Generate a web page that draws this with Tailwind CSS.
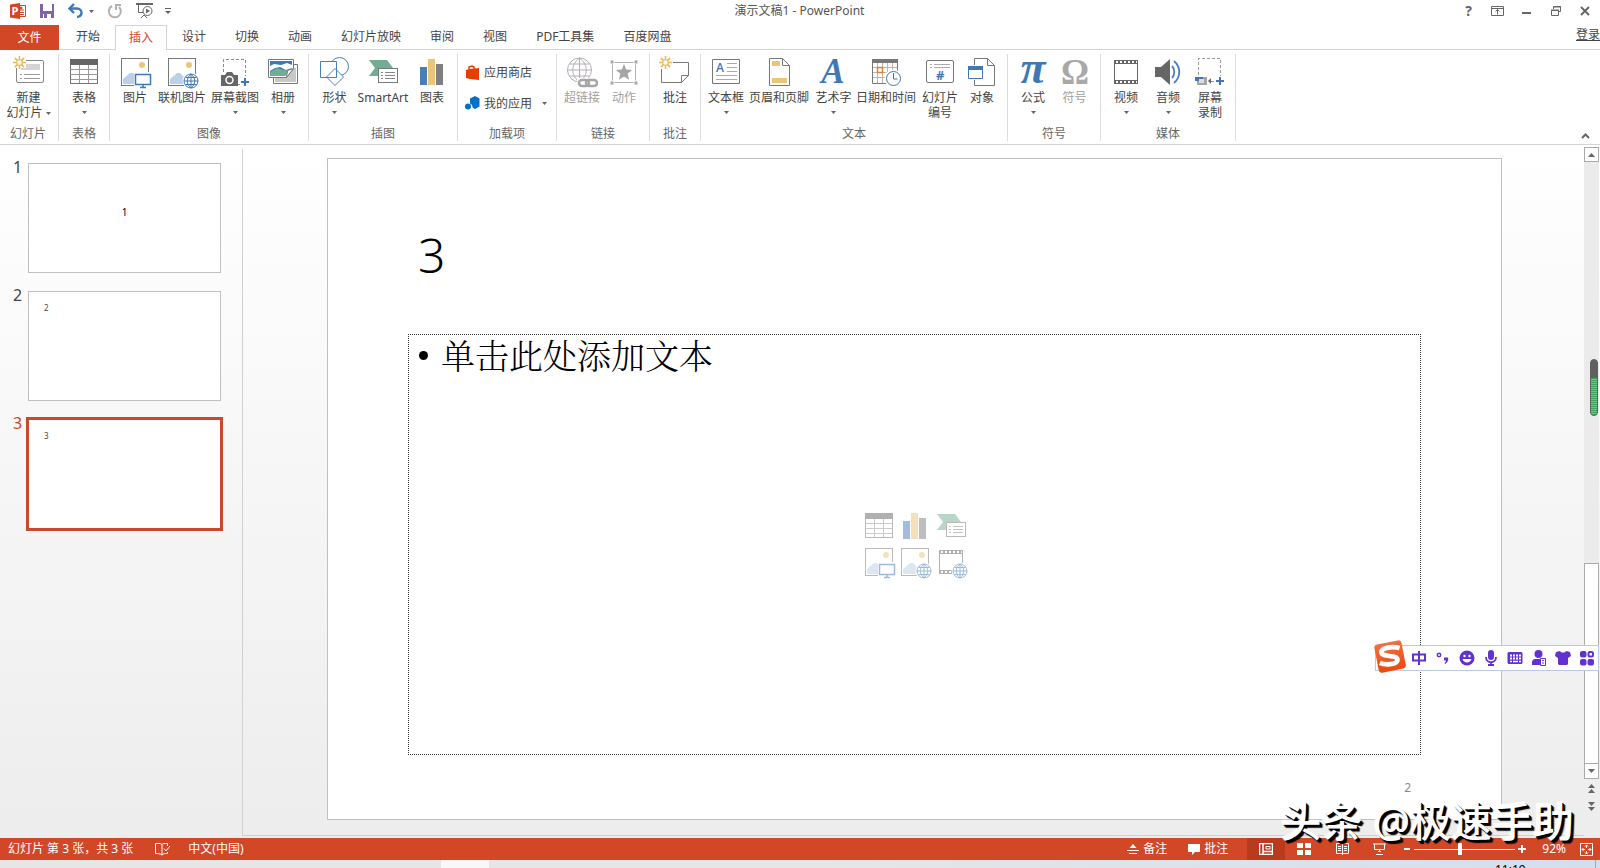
<!DOCTYPE html>
<html lang="zh-CN">
<head>
  <meta charset="UTF-8">
  <meta name="viewport" content="width=device-width, initial-scale=1.0">
  <title>演示文稿1 - PowerPoint</title>
  <script src="https://cdn.jsdelivr.net/npm/@tailwindcss/browser@4"></script>
</head>
<body class="relative flex h-screen flex-col overflow-hidden bg-white font-['Noto_Sans','Noto_Sans_CJK_SC',sans-serif] text-xs text-[#444]">

  <!-- Shared icons -->
  <svg class="hidden">
    <symbol id="i-table" viewBox="0 0 32 32">
      <rect x="2.5" y="3.5" width="27" height="24" fill="#fff" stroke="#777"/>
      <rect x="2" y="3" width="28" height="6" fill="#666"/>
      <path d="M11.5 9v18M20.5 9v18M3 13.5h26M3 18.5h26M3 23.5h26" stroke="#999" fill="none"/>
    </symbol>
    <symbol id="i-chart" viewBox="0 0 32 32">
      <path d="M4 11h7v18H4z" fill="#4a7ebb"/><path d="M12 3h7v26h-7z" fill="#eac57a"/><path d="M20 8h7v21h-7z" fill="#7f7f7f"/>
    </symbol>
    <symbol id="i-smartart" viewBox="0 0 32 32">
      <path d="M2 4h18l6 8H11v8H2l6-8z" fill="#71ac93"/>
      <rect x="11.5" y="12.5" width="19" height="14" fill="#fff" stroke="#777"/>
      <path d="M14 16.5h2M18 16.5h10M14 19.5h2M18 19.5h10M14 22.5h2M18 22.5h10" stroke="#888"/>
    </symbol>
    <symbol id="i-photo" viewBox="0 0 32 32">
      <rect x="2.5" y="2.5" width="27" height="27" fill="#fff" stroke="#777"/>
      <circle cx="23" cy="9" r="3" fill="#eac57a"/>
      <path d="M4 28v-5l7-6h3l7 7v4z" fill="#bcd0ea"/>
    </symbol>
    <symbol id="i-globe" viewBox="0 0 16 16">
      <circle cx="8" cy="8" r="7" fill="#fff" stroke="#3f78b5"/>
      <path d="M1 8h14M8 1v14M2.500 4.500h11M2.500 11.500h11M8 1c-5 4-5 10 0 14M8 1c5 4 5 10 0 14" fill="none" stroke="#3f78b5"/>
    </symbol>
    <symbol id="i-picture" viewBox="0 0 34 34">
      <use href="#i-photo" width="32" height="32"/>
      <path d="M15 16h17v17H15z" fill="#fff"/>
      <rect x="16.500" y="18.500" width="15" height="10" fill="#fff" stroke="#3f78b5" stroke-width="1.500"/>
      <path d="M24 29v2M21 31.500h6" stroke="#3f78b5" stroke-width="1.500"/>
    </symbol>
    <symbol id="i-online" viewBox="0 0 34 34">
      <use href="#i-photo" width="32" height="32"/>
      <circle cx="25" cy="25" r="8.500" fill="#fff"/>
      <use href="#i-globe" x="17" y="17" width="16" height="16"/>
    </symbol>
    <symbol id="i-film" viewBox="0 0 32 32">
      <path d="M4 4h24v24H4z" fill="#666"/><path d="M5 8h22v16H5z" fill="#fff"/>
      <path d="M6 6h21M6 26h21" stroke="#fff" stroke-width="2" stroke-dasharray="2 2"/>
    </symbol>
    <symbol id="i-spark" viewBox="0 0 14 14">
      <path d="M7 0v14M0 7h14M2 2l10 10M12 2L2 12" stroke="#e8b654" stroke-width="1.600"/>
      <circle cx="7" cy="7" r="3" fill="#fff" stroke="#e8b654" stroke-width="1.200"/>
    </symbol>
    <symbol id="i-down" viewBox="0 0 7 4"><path d="M0 0h7L3.500 4z" fill="#666"/></symbol>
  </svg>

  <!-- Title bar -->
  <header class="flex h-[25px] shrink-0 items-center pb-[3px]">
    <div class="flex flex-1 items-center pl-[9px]">
      <svg class="size-[18px]" viewBox="0 0 18 18" role="img" aria-label="PowerPoint">
        <path d="M9 3.500h7.500v11H9" fill="#fff" stroke="#d24726"/><path d="M11 8h4M11 10.500h4M11 12.500h4" stroke="#d24726"/><circle cx="12" cy="6" r="1.500" fill="#d24726"/>
        <path d="M1 2.500L11 1v16L1 15.500z" fill="#d24726"/>
        <text x="2.500" y="13" font-size="11" font-weight="700" fill="#fff" font-family="Open Sans">P</text>
      </svg>
      <button aria-label="保存" class="ml-[12px]"><svg class="size-4" viewBox="0 0 16 16"><path d="M1 1h14v14H1z" fill="#8064a8"/><path d="M4 1h9v7H4z" fill="#fff"/><path d="M4 11h8v4H4z" fill="#fff"/><path d="M5 11h3v4H5z" fill="#8064a8"/></svg></button>
      <button aria-label="撤消" class="ml-[13px] flex items-center gap-[5px]"><svg class="size-4" viewBox="0 0 16 16"><path d="M2 5.500h7c6 0 6 8 0 8.500" fill="none" stroke="#3f78b5" stroke-width="2.400"/><path d="M6 1L1.500 5.500 6 10" fill="none" stroke="#3f78b5" stroke-width="2.400"/></svg><svg class="h-[3px] w-[5px]"><use href="#i-down"/></svg></button>
      <button aria-label="恢复" class="ml-[13px]"><svg class="size-4" viewBox="0 0 16 16"><path d="M5 3a6 6 0 1 0 7 1" fill="none" stroke="#b1b1b1" stroke-width="2"/><path d="M9 7V2h5" fill="none" stroke="#b1b1b1" stroke-width="2"/></svg></button>
      <button aria-label="从头开始放映" class="ml-[13px]"><svg class="h-4 w-[17px]" viewBox="0 0 17 16"><path d="M0 1h17" stroke="#666" stroke-width="2"/><path d="M2.500 2v7.500H8M5 15l3-3 3 3" fill="none" stroke="#666"/><circle cx="11.500" cy="8" r="4.500" fill="#fff" stroke="#666"/><path d="M10 5.500v5l4-2.500z" fill="#666"/></svg></button>
      <button aria-label="自定义快速访问工具栏" class="ml-[12px]"><svg class="h-2 w-[6px]" viewBox="0 0 6 8"><path d="M0 1.500h6" stroke="#666"/><path d="M0 4h6L3 7z" fill="#666"/></svg></button>
    </div>
    <h1 class="shrink-0 text-[#555]">演示文稿1 - PowerPoint</h1>
    <div class="flex flex-1 items-center justify-end pr-[10px] text-[#666]">
      <button aria-label="帮助" class="mr-[19px] text-sm font-bold">?</button>
      <button aria-label="功能区显示选项" class="mr-[18px]"><svg class="h-[10px] w-[13px]" viewBox="0 0 13 10" fill="none" stroke="currentColor"><path d="M.5.5h12v9H.5zM1 2.500h11M6.500 8.500v-5M4.500 5.500l2-2 2 2"/></svg></button>
      <button aria-label="最小化" class="mr-[20px]"><svg class="h-[10px] w-[9px]" viewBox="0 0 9 10"><path d="M0 7h9" stroke="currentColor" stroke-width="2"/></svg></button>
      <button aria-label="向下还原" class="mr-[19px]"><svg class="size-[10px]" viewBox="0 0 10 10" fill="none" stroke="currentColor"><path d="M.5 4.500h7v5h-7zM0 4h8M2.500 3V.5h7v5H8M2 1h8"/></svg></button>
      <button aria-label="关闭"><svg class="size-[10px]" viewBox="0 0 10 10"><path d="M1 1l8 8M9 1L1 9" stroke="currentColor" stroke-width="2"/></svg></button>
    </div>
  </header>

  <!-- Ribbon tabs -->
  <nav class="flex h-[25px] shrink-0 gap-px border-b border-[#d4d4d4] leading-6">
    <button class="-mb-px mr-[2px] w-[59px] bg-[#d24726] text-white">文件</button>
    <button class="px-[14px]">开始</button>
    <button class="-mb-px border border-b-0 border-[#d4d4d4] bg-white px-[13px] text-[#d24726]">插入</button>
    <button class="px-[14px]">设计</button>
    <button class="px-[14px]">切换</button>
    <button class="px-[14px]">动画</button>
    <button class="px-[14px]">幻灯片放映</button>
    <button class="px-[14px]">审阅</button>
    <button class="px-[14px]">视图</button>
    <button class="px-[14px]">PDF工具集</button>
    <button class="px-[14px]">百度网盘</button>
    <a href="#" class="-mt-px ml-auto leading-[22px] underline">登录</a>
  </nav>

  <!-- Ribbon -->
  <div class="flex h-[95px] shrink-0 border-b border-[#d4d4d4] pt-1 pb-[3px] leading-[15px] whitespace-nowrap">
    <section class="flex w-[59px] flex-col justify-between border-r border-[#dcdcdc]">
      <button class="flex w-[57px] flex-col items-center gap-[2px] pt-[2px]">
        <svg class="size-8" viewBox="0 0 32 32"><rect x="3.500" y="4.500" width="27" height="22" rx="1.500" fill="#fff" stroke="#888"/><path d="M8 8h19v6H8z" fill="#d4d4d4"/><path d="M7 18.500h2M11 18.500h16M7 22.500h2M11 22.500h16" stroke="#999"/><path d="M0 0h13v12H0z" fill="#fff"/><use href="#i-spark" width="13" height="13"/></svg>
        <span>新建<br>幻灯片 <svg class="inline h-[3px] w-[5px] align-middle"><use href="#i-down"/></svg></span>
      </button>
      <h2 class="pr-[2px] text-center text-[#666]">幻灯片</h2>
    </section>

    <section class="flex w-[51px] flex-col justify-between border-r border-[#dcdcdc]">
      <button class="flex flex-col items-center gap-[2px] pt-[2px]">
        <svg class="size-8"><use href="#i-table"/></svg>
        <span>表格</span>
        <svg class="mt-1 h-[3px] w-[5px]"><use href="#i-down"/></svg>
      </button>
      <h2 class="text-center text-[#666]">表格</h2>
    </section>

    <section class="flex w-[199px] flex-col justify-between border-r border-[#dcdcdc]">
      <div class="flex items-start pl-[2px]">
        <button class="flex w-[46px] flex-col items-center gap-[2px] pt-[2px]">
          <svg class="-mr-[2px] -mb-[2px] size-[34px]"><use href="#i-picture"/></svg>
          <span>图片</span>
        </button>
        <button class="flex w-[48px] flex-col items-center gap-[2px] pt-[2px]">
          <svg class="-mr-[2px] -mb-[2px] size-[34px]"><use href="#i-online"/></svg>
          <span>联机图片</span>
        </button>
        <button class="flex w-[58px] flex-col items-center gap-[2px] pt-[2px]">
          <svg class="size-8" viewBox="0 0 32 32"><path d="M4.500 16V3.500h22V20M18 28.500h4" fill="none" stroke="#888" stroke-dasharray="3 2"/><path d="M2 19h4l2-3h5l2 3h4v11H2z" fill="#666"/><circle cx="10.500" cy="24" r="3.500" fill="#666" stroke="#fff" stroke-width="1.500"/><path d="M26 22v8M22 26h8" stroke="#3f78b5" stroke-width="2"/></svg>
          <span>屏幕截图</span>
          <svg class="mt-1 h-[3px] w-[5px]"><use href="#i-down"/></svg>
        </button>
        <button class="flex w-[38px] flex-col items-center gap-[2px] pt-[2px]">
          <svg class="size-8" viewBox="0 0 32 32"><path d="M6.500 8.500h24v19h-24z" fill="#fff" stroke="#777"/><path d="M8 22l10-4 5-6h6v14H8z" fill="#c8c8c8"/><path d="M1.500 3.500h25v9l-7 9h-18z" fill="#fff" stroke="#777"/><path d="M3 5h22v7l-7 8H3z" fill="#3f78b5"/><path d="M3 16l7-4 12 3-4 5H3z" fill="#71ac93"/><path d="M3 10l4-2 7 1 6-2 5 2v3l-6 2-6-3-5 1-5 3z" fill="#fff"/><path d="M19.500 21.500l1-7 6-2z" fill="#fff" stroke="#777"/></svg>
          <span>相册</span>
          <svg class="mt-1 h-[3px] w-[5px]"><use href="#i-down"/></svg>
        </button>
      </div>
      <h2 class="text-center text-[#666]">图像</h2>
    </section>

    <section class="flex w-[149px] flex-col justify-between border-r border-[#dcdcdc]">
      <div class="flex items-start pl-[7px]">
        <button class="flex w-[37px] flex-col items-center gap-[2px] pt-[2px]">
          <svg class="size-8" viewBox="0 0 32 32" fill="#fff" stroke="#4a7ebb"><circle cx="20.500" cy="10.500" r="9"/><path d="M1.500 5.500h16v16h-16zM16 12.500l8.500 8.500-8.500 8.500L7.500 21z"/></svg>
          <span>形状</span>
          <svg class="mt-1 h-[3px] w-[5px]"><use href="#i-down"/></svg>
        </button>
        <button class="flex w-[60px] flex-col items-center gap-[2px] pt-[2px]">
          <svg class="size-8"><use href="#i-smartart"/></svg>
          <span>SmartArt</span>
        </button>
        <button class="flex w-[38px] flex-col items-center gap-[2px] pt-[2px]">
          <svg class="size-8"><use href="#i-chart"/></svg>
          <span>图表</span>
        </button>
      </div>
      <h2 class="text-center text-[#666]">插图</h2>
    </section>

    <section class="flex w-[99px] flex-col justify-between border-r border-[#dcdcdc]">
      <div class="flex flex-col gap-4 pt-[11px] pl-[7px]">
        <button class="flex items-center gap-1">
          <svg class="size-[15px]" viewBox="0 0 15 15"><path d="M4 5V2l3-1 2 1v3" fill="none" stroke="#eb3c00" stroke-width="1.500"/><path d="M1 5l4-1v10l-4-1zM5 4l9-1v12l-9-1z" fill="#eb3c00"/></svg>
          应用商店
        </button>
        <button class="flex items-center gap-1">
          <svg class="size-[15px]" viewBox="0 0 15 15" fill="#0072c6"><path d="M10 0l4.500 2.500v8L10 13l-2.500-1.500a4 4 0 0 0-2.500-4v-5z"/><circle cx="3" cy="10.500" r="3"/></svg>
          我的应用
          <svg class="ml-[6px] h-[3px] w-[5px]"><use href="#i-down"/></svg>
        </button>
      </div>
      <h2 class="text-center text-[#666]">加载项</h2>
    </section>

    <section class="flex w-[93px] flex-col justify-between border-r border-[#dcdcdc]">
      <div class="flex items-start pl-1 text-[#a0a0a0]">
        <button class="flex w-[42px] flex-col items-center gap-[2px] pt-[2px]">
          <svg class="size-8" viewBox="0 0 32 32" fill="none" stroke="#b3aeb6"><circle cx="13.500" cy="14" r="12"/><path d="M1.500 14h24M13.500 2v24M3.500 8h20M3.500 20h20M13.500 2c-9 7-9 17 0 24M13.500 2c9 7 9 17 0 24"/><path d="M11 22h21v10H11z" fill="#fff" stroke="none"/><g stroke="#a5a5a5" stroke-width="2.500"><rect x="13" y="24" width="10" height="6" rx="3"/><rect x="20" y="24" width="11" height="6" rx="3"/></g></svg>
          <span>超链接</span>
        </button>
        <button class="flex w-[42px] flex-col items-center gap-[2px] pt-[2px]">
          <svg class="size-8" viewBox="0 0 32 32"><path d="M4.500 6.500h23v20h-23z" fill="none" stroke="#b0b0b0"/><path d="M2 4h4v4H2zM26 4h4v4h-4zM2 25h4v4H2zM26 25h4v4h-4z" fill="#a5a5a5" stroke="#fff"/><path d="M16 8l2.200 5.600 6 .4-4.600 3.800 1.500 5.900L16 20.500l-5.100 3.200 1.500-5.900L7.800 14l6-.4z" fill="#a5a5a5"/></svg>
          <span>动作</span>
        </button>
      </div>
      <h2 class="text-center text-[#666]">链接</h2>
    </section>

    <section class="flex w-[51px] flex-col justify-between border-r border-[#dcdcdc]">
      <button class="flex flex-col items-center gap-[2px] pt-[2px]">
        <svg class="size-8" viewBox="0 0 32 32"><path d="M2.500 13v13.500h20l7-7v-13H14M22.500 26.500v-7h7" fill="none" stroke="#777"/><use href="#i-spark" width="13" height="13"/></svg>
        <span>批注</span>
      </button>
      <h2 class="text-center text-[#666]">批注</h2>
    </section>

    <section class="flex w-[307px] flex-col justify-between border-r border-[#dcdcdc]">
      <div class="flex items-start pl-[5px]">
        <button class="flex w-[40px] flex-col items-center gap-[2px] pt-[2px]">
          <svg class="size-8" viewBox="0 0 32 32"><path d="M2.500 3.500h27v24h-27z" fill="#fff" stroke="#777"/><text x="6" y="16" font-size="12" font-weight="600" fill="#3f78b5" font-family="Open Sans">A</text><path d="M17 7.500h10M17 11.500h10M17 15.500h10M6 19.500h21M6 23.500h21" stroke="#aaa"/></svg>
          <span>文本框</span>
          <svg class="mt-1 h-[3px] w-[5px]"><use href="#i-down"/></svg>
        </button>
        <button class="flex w-[66px] flex-col items-center gap-[2px] pt-[2px]">
          <svg class="size-8" viewBox="0 0 32 32"><path d="M6.500 2.500h13l7 7v20h-20z" fill="#fff" stroke="#777"/><path d="M19.500 2.500v7h7" fill="none" stroke="#777"/><path d="M9 5h8v5H9zM9 22h15v5H9z" fill="#eac57a"/></svg>
          <span>页眉和页脚</span>
        </button>
        <button class="flex w-[43px] flex-col items-center gap-[2px] pt-[2px]">
          <svg class="size-8 overflow-visible" viewBox="0 0 32 32"><text x="15" y="27" text-anchor="middle" font-size="35" font-weight="700" font-style="italic" fill="#3f78b5" font-family="Liberation Serif">A</text></svg>
          <span>艺术字</span>
          <svg class="mt-1 h-[3px] w-[5px]"><use href="#i-down"/></svg>
        </button>
        <button class="flex w-[62px] flex-col items-center gap-[2px] pt-[2px]">
          <svg class="size-8" viewBox="0 0 32 32"><path d="M2.500 3.500h25v24h-25z" fill="#fff" stroke="#777"/><path d="M2 3h26v4H2z" fill="#777"/><path d="M7.500 7v20M12.500 7v20M17.500 7v20M22.500 7v20M3 11.500h24M3 16.500h24M3 21.500h24" stroke="#c3b3a5"/><path d="M7.500 11.500h5v5h-5z" fill="#fff" stroke="#d9823b" stroke-width="1.500"/><circle cx="23.500" cy="22.500" r="9" fill="#fff"/><circle cx="23.500" cy="22.500" r="7" fill="#fff" stroke="#3f78b5"/><path d="M23.500 17v6h4" fill="none" stroke="#666"/></svg>
          <span>日期和时间</span>
        </button>
        <button class="flex w-[46px] flex-col items-center gap-[2px] pt-[2px]">
          <svg class="size-8" viewBox="0 0 32 32"><rect x="2.500" y="4.500" width="27" height="22" rx="1.500" fill="#fff" stroke="#777"/><path d="M6 8.500h2M10 8.500h16M6 11.500h2M10 11.500h16" stroke="#aaa"/><text x="12" y="24" font-size="13" font-weight="700" fill="#3f78b5" font-family="Open Sans">#</text></svg>
          <span>幻灯片<br>编号</span>
        </button>
        <button class="flex w-[38px] flex-col items-center gap-[2px] pt-[2px]">
          <svg class="size-8" viewBox="0 0 32 32"><path d="M8.500 2.500h13l7 7v20h-20z" fill="#fff" stroke="#777"/><path d="M21.500 2.500v7h7" fill="none" stroke="#777"/><path d="M1 9h17v15H1z" fill="#fff"/><path d="M2.500 10.500h14v12h-14z" fill="#fff" stroke="#3f78b5"/><path d="M2 10h15v4H2z" fill="#3f78b5"/></svg>
          <span>对象</span>
        </button>
      </div>
      <h2 class="text-center text-[#666]">文本</h2>
    </section>

    <section class="flex w-[93px] flex-col justify-between border-r border-[#dcdcdc]">
      <div class="flex items-start pl-[5px]">
        <button class="flex w-[40px] flex-col items-center gap-[2px] pt-[2px]">
          <svg class="size-8 overflow-visible" viewBox="0 0 32 32"><text x="16" y="27" text-anchor="middle" font-size="46" font-weight="700" font-style="italic" fill="#3f78b5" font-family="Liberation Serif">π</text></svg>
          <span>公式</span>
          <svg class="mt-1 h-[3px] w-[5px]"><use href="#i-down"/></svg>
        </button>
        <button class="flex w-[43px] flex-col items-center gap-[2px] pt-[2px] text-[#a0a0a0]">
          <svg class="size-8 overflow-visible" viewBox="0 0 32 32"><text x="16" y="28" text-anchor="middle" font-size="35" font-weight="700" fill="#a8a8a8" font-family="Liberation Serif">Ω</text></svg>
          <span>符号</span>
        </button>
      </div>
      <h2 class="text-center text-[#666]">符号</h2>
    </section>

    <section class="flex w-[135px] flex-col justify-between border-r border-[#dcdcdc]">
      <div class="flex items-start pl-1">
        <button class="flex w-[42px] flex-col items-center gap-[2px] pt-[2px]">
          <svg class="size-8"><use href="#i-film"/></svg>
          <span>视频</span>
          <svg class="mt-1 h-[3px] w-[5px]"><use href="#i-down"/></svg>
        </button>
        <button class="flex w-[42px] flex-col items-center gap-[2px] pt-[2px]">
          <svg class="size-8" viewBox="0 0 32 32"><path d="M3 11h6l9-8v26l-9-8H3z" fill="#666"/><path d="M20 10c3 3 3 9 0 12M22 5c7 6 7 16 0 22" fill="none" stroke="#4a7ebb" stroke-width="1.800"/></svg>
          <span>音频</span>
          <svg class="mt-1 h-[3px] w-[5px]"><use href="#i-down"/></svg>
        </button>
        <button class="flex w-[42px] flex-col items-center gap-[2px] pt-[2px]">
          <svg class="size-8" viewBox="0 0 32 32"><path d="M4.500 19V2.500h22V20M17 25.500h5" fill="none" stroke="#999" stroke-dasharray="3 2"/><path d="M1 21h12v8H3v-4H1z" fill="#a5a5a5"/><path d="M1 21h8v4H1z" fill="#3f78b5"/><path d="M5 23h5v4H5z" fill="#ddd"/><path d="M14 25l3-3v6z" fill="#666"/><path d="M26 21v8M22 25h8" stroke="#3f78b5" stroke-width="2"/></svg>
          <span>屏幕<br>录制</span>
        </button>
      </div>
      <h2 class="text-center text-[#666]">媒体</h2>
    </section>

    <button aria-label="折叠功能区" class="mr-[10px] ml-auto self-end pb-[2px]"><svg class="h-[6px] w-[9px]" viewBox="0 0 9 6"><path d="M1 5l3.500-3.500L8 5" fill="none" stroke="#666" stroke-width="2"/></svg></button>
  </div>

  <!-- Work area -->
  <main class="flex min-h-0 flex-1 bg-linear-to-b from-white to-[#ededed]">
    <!-- Slide thumbnails -->
    <aside class="mt-1 mb-[2px] flex w-[243px] shrink-0 flex-col gap-[18px] border-r border-[#d0d0d0] pt-[14px] text-base leading-[16px]">
      <a href="#" class="flex gap-[5px] pl-[13px]">
        <span class="-mt-1 w-[10px]">1</span>
        <span class="flex h-[110px] w-[193px] items-center justify-center border border-[#c0c0c0] bg-white pb-3 text-[10px] leading-3 text-black">1</span>
      </a>
      <a href="#" class="flex gap-[5px] pl-[13px]">
        <span class="-mt-1 w-[10px]">2</span>
        <span class="h-[110px] w-[193px] border border-[#c0c0c0] bg-white px-[15px] py-[10px] text-[8px] leading-3">2</span>
      </a>
      <a href="#" class="flex gap-[5px] pl-[13px] text-[#d24726]">
        <span class="-mt-1 w-[10px]">3</span>
        <span class="h-[110px] w-[193px] border border-[#c8492b] bg-white px-[15px] py-[10px] text-[8px] leading-3 text-[#444] ring-2 ring-[#c8492b]">3</span>
      </a>
    </aside>

    <!-- Slide canvas -->
    <div class="mb-[2px] flex flex-1 border-b border-[#d0d0d0] pt-[13px] pr-[82px] pb-[15px] pl-[84px]">
      <article class="flex flex-1 flex-col border border-[#c0c0c0] bg-white px-[80px] text-black">
        <h2 class="flex h-[175px] items-center pt-4 pl-[10px] text-5xl font-light">3</h2>
        <div class="flex flex-1 flex-col border border-dotted border-[#333]">
          <p class="flex h-[40px] items-center gap-[13px] pl-[10px] font-['Noto_Serif_CJK_SC','Noto_Sans_CJK_SC',sans-serif] text-[34px] leading-[38px] font-light"><span class="size-[9px] rounded-full bg-black"></span>单击此处添加文本</p>
          <div class="mb-[42px] grid flex-1 grid-cols-[repeat(3,32px)] place-content-center gap-1 opacity-50">
            <button aria-label="插入表格" class="size-8"><svg class="size-8"><use href="#i-table"/></svg></button>
            <button aria-label="插入图表" class="size-8"><svg class="size-8"><use href="#i-chart"/></svg></button>
            <button aria-label="插入 SmartArt 图形" class="size-8"><svg class="size-8"><use href="#i-smartart"/></svg></button>
            <button aria-label="图片" class="size-8"><svg class="size-[34px]"><use href="#i-picture"/></svg></button>
            <button aria-label="联机图片" class="size-8"><svg class="size-[34px]"><use href="#i-online"/></svg></button>
            <button aria-label="插入视频" class="size-8"><svg class="size-[34px]" viewBox="0 0 34 34"><use href="#i-film" width="32" height="32"/><circle cx="25" cy="25" r="8.500" fill="#fff"/><use href="#i-globe" x="17" y="17" width="16" height="16"/></svg></button>
          </div>
        </div>
        <p class="h-[64px] pt-[25px] pr-[10px] text-right text-[#898989]">2</p>
      </article>
    </div>

    <!-- Vertical scrollbar -->
    <div class="mr-px flex w-[15px] shrink-0 flex-col items-center pt-[2px]">
      <button aria-label="向上滚动" class="flex h-[15px] w-full items-center justify-center border border-[#ababab] bg-white"><svg class="h-1 w-[7px] rotate-180"><use href="#i-down"/></svg></button>
      <div class="flex w-full flex-1 flex-col bg-[#ebebeb]">
        <div class="flex flex-[402] items-center justify-end pr-px">
          <div class="mt-[50px] h-[57px] w-2 overflow-hidden rounded-full border border-[#606060] bg-[#606060] pt-[18px]"><div class="h-full bg-[repeating-linear-gradient(#3fa45c_0_1px,#6cc584_1px_2px)]"></div></div>
        </div>
        <div class="flex-[200] border border-[#ababab] bg-white"></div>
      </div>
      <button aria-label="向下滚动" class="flex h-[15px] w-full items-center justify-center border border-t-0 border-[#ababab] bg-white"><svg class="h-1 w-[7px]"><use href="#i-down"/></svg></button>
      <button aria-label="上一张幻灯片" class="h-[18px]"><svg class="h-[9px] w-[7px]" viewBox="0 0 7 9"><path d="M3.500 0L7 4H0zM3.500 5L7 9H0z" fill="#666"/></svg></button>
      <button aria-label="下一张幻灯片" class="mb-[23px] h-[18px]"><svg class="h-[9px] w-[7px]" viewBox="0 0 7 9"><path d="M0 0h7L3.500 4zM0 5h7L3.500 9z" fill="#666"/></svg></button>
    </div>
  </main>

  <!-- Status bar -->
  <footer class="flex h-[22px] shrink-0 items-center bg-[#d24726] text-white">
    <span class="pl-2">幻灯片 第 3 张，共 3 张</span>
    <button aria-label="拼写检查" class="ml-[22px]"><svg class="h-[14px] w-[15px]" viewBox="0 0 15 14" fill="none" stroke="#fff"><path d="M7 2.500C5 1 3 1.500.5 1.500v10c2.500 0 4.500 0 6.500 1.500V2.500C8 1.500 9 1.500 12.500 1.500V4M7 13c1.500-1.500 3-1.500 5.500-1.500V10M9 6.500l2 2.500 4-5"/></svg></button>
    <button class="ml-[18px]">中文(中国)</button>
    <button class="ml-auto flex items-center gap-1"><svg class="size-3" viewBox="0 0 12 12"><path d="M6 1l3.500 4h-7z" fill="#fff"/><path d="M0 7.500h12M2 10.500h8" stroke="#fff"/></svg>备注</button>
    <button class="mr-[19px] ml-[21px] flex items-center gap-1"><svg class="size-3" viewBox="0 0 12 12"><path d="M0 1h12v8H7l-3 3V9H0z" fill="#fff"/></svg>批注</button>
    <button aria-label="普通视图" class="flex h-full w-[38px] items-center justify-center bg-[#b83b1d]"><svg class="h-3 w-[14px]" viewBox="0 0 14 12" fill="none" stroke="#fff"><path d="M.5.5h13v11H.5zM4 .5v11M4 8.500h9.500" stroke-width="1.500"/><path d="M7 3.500h4v2.500H7z"/></svg></button>
    <button aria-label="幻灯片浏览" class="flex w-[38px] justify-center"><svg class="h-3 w-[14px]" viewBox="0 0 14 12" fill="#fff"><path d="M0 0h6v5H0zM8 0h6v5H8zM0 7h6v5H0zM8 7h6v5H8z"/></svg></button>
    <button aria-label="阅读视图" class="flex w-[38px] justify-center"><svg class="h-3 w-[13px]" viewBox="0 0 13 12" fill="none" stroke="#fff"><path d="M.5.5h5l1 1 1-1h5v10h-5l-1 1-1-1h-5zM6.500 1.500v10M2 3.500h3M2 5.500h3M2 7.500h3M8 3.500h3M8 5.500h3M8 7.500h3"/></svg></button>
    <button aria-label="幻灯片放映" class="flex w-[37px] justify-center"><svg class="h-3 w-[13px]" viewBox="0 0 13 12" fill="none" stroke="#fff"><path d="M0 1h13M1.500 1v5.500h10V1M6.500 7v2M3 11.500h7M5 9l1.500-1.500L8 9"/></svg></button>
    <div class="flex items-center gap-[3px] pl-[5px]">
      <button aria-label="缩小"><svg class="size-2" viewBox="0 0 8 8"><path d="M1 4h6" stroke="#fff" stroke-width="2"/></svg></button>
      <input type="range" min="0" max="100" value="45" aria-label="缩放" class="h-3 w-[101px] appearance-none bg-[linear-gradient(#fff,#fff)] bg-[length:100%_1px] bg-center bg-no-repeat [&::-webkit-slider-thumb]:h-3 [&::-webkit-slider-thumb]:w-1 [&::-webkit-slider-thumb]:appearance-none [&::-webkit-slider-thumb]:bg-white">
      <button aria-label="放大"><svg class="size-2" viewBox="0 0 8 8"><path d="M0 4h8M4 0v8" stroke="#fff" stroke-width="2"/></svg></button>
    </div>
    <button class="ml-4">92%</button>
    <button aria-label="适应窗口大小" class="mr-[7px] ml-[14px]"><svg class="size-[13px]" viewBox="0 0 13 13" fill="none" stroke="#fff"><path d="M.5.5h12v12H.5zM6.500 2v3M6.500 8v3M2 6.500h3M8 6.500h3M5 3.500l1.500-1.500L8 3.500M5 9.500L6.500 11 8 9.500M3.500 5L2 6.500 3.500 8M9.500 5L11 6.500 9.500 8"/></svg></button>
  </footer>

  <!-- Windows taskbar -->
  <div class="flex h-2 shrink-0 overflow-hidden bg-linear-to-r from-[#e6e6e6] from-50% to-[#d3dfee]">
    <div class="ml-[441px] w-[48px] bg-[#f8f8f8]"></div>
    <time class="mr-1 ml-auto w-[101px] border-r border-[#9aa9bb] pt-[2px] leading-4 text-black">11:19</time>
  </div>

  <!-- Input method toolbar -->
  <div class="absolute top-[645px] right-px flex h-[26px] items-center gap-2 border border-[#b9c9e6] bg-white pr-[3px] pl-[35px] text-[#6232d0]">
    <svg class="absolute -top-[7px] -left-[3px] size-[34px]" viewBox="0 0 32 32"><defs><linearGradient id="sg" x2="0" y2="1"><stop stop-color="#ef7045"/><stop offset="1" stop-color="#ec4a0c"/></linearGradient></defs><rect x="3" y="3" width="26" height="27" rx="3" fill="url(#sg)" transform="rotate(-11 16 16)"/><path d="M25 8.500C19 7 8 7.500 8 12.500c0 5 15 2 15 7 0 5-12 5-16.500 3" fill="none" stroke="#fff" stroke-width="4.500"/></svg>
    <button aria-label="中文输入"><svg class="size-4" viewBox="0 0 16 16" fill="none" stroke="currentColor" stroke-width="2"><path d="M2 4.500h12v6H2zM8 1v14"/></svg></button>
    <button aria-label="中文标点"><svg class="size-4" viewBox="0 0 16 16"><circle cx="4" cy="5" r="1.700" fill="none" stroke="currentColor" stroke-width="1.500"/><path d="M9 7.500h4c1 3-1 5.500-3 6.500l-.5-1c1-.7 1.500-1.500 1.500-2.500H9z" fill="currentColor"/></svg></button>
    <button aria-label="表情"><svg class="size-4" viewBox="0 0 16 16"><circle cx="8" cy="8" r="7.500" fill="currentColor"/><circle cx="5.500" cy="6" r="1.200" fill="#fff"/><circle cx="10.500" cy="6" r="1.200" fill="#fff"/><path d="M3.500 9h9c-1 4.500-8 4.500-9 0z" fill="#fff"/></svg></button>
    <button aria-label="语音"><svg class="size-4" viewBox="0 0 16 16"><rect x="5" y="0" width="6" height="10" rx="3" fill="currentColor"/><path d="M3 7c0 7 10 7 10 0M8 12v3M5 15h6" fill="none" stroke="currentColor" stroke-width="1.800"/></svg></button>
    <button aria-label="软键盘"><svg class="size-4" viewBox="0 0 16 16"><rect x=".5" y="2" width="15" height="12" rx="1.500" fill="currentColor"/><path d="M3 5.500h11M3 8.500h11" stroke="#fff" stroke-width="1.800" stroke-dasharray="2 1"/><path d="M3 11.500h2M6 11.500h5M12 11.500h2" stroke="#fff" stroke-width="1.500"/></svg></button>
    <button aria-label="用户"><svg class="size-4" viewBox="0 0 16 16"><circle cx="7.500" cy="4" r="4" fill="currentColor"/><path d="M1 15V12c0-2 2-3 3-3h7v6z" fill="currentColor"/><path d="M9.500 8.500h5v7h-5z" fill="#fff" stroke="currentColor"/><path d="M11 10.500h2M11 13h2" stroke="currentColor"/></svg></button>
    <button aria-label="皮肤"><svg class="size-4" viewBox="0 0 16 16"><path d="M5 1c1 2 5 2 6 0l4 1 1 4-3 2v6l-1 1H4l-1-1V8L0 6l1-4z" fill="currentColor"/></svg></button>
    <button aria-label="工具箱"><svg class="size-4" viewBox="0 0 16 16" fill="currentColor"><rect x="1" y="1" width="6.500" height="6.500" rx="2"/><rect x="9.500" y="2" width="4.500" height="4.500" rx="1.500" fill="none" stroke="currentColor" stroke-width="2"/><rect x="1" y="9" width="6.500" height="6.500" rx="2"/><rect x="8.500" y="9" width="6.500" height="6.500" rx="2"/></svg></button>
  </div>

  <!-- Watermark -->
  <div class="pointer-events-none absolute right-[26px] bottom-[19px] text-[41px] leading-[56px] font-medium whitespace-nowrap text-white [text-shadow:1px_1px_0_#000,2px_2px_0_#000,3px_3px_1px_#000,-1px_-1px_1px_#fff]">头条 @极速手助</div>
</body>
</html>
